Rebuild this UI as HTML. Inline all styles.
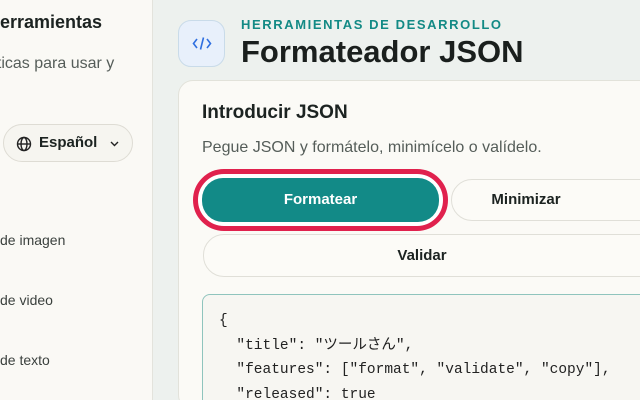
<!DOCTYPE html>
<html><head><meta charset="utf-8"><style>
*{margin:0;padding:0;box-sizing:border-box}
html,body{width:640px;height:400px;overflow:hidden}
body{background:#edf1ee;font-family:"Liberation Sans","Noto Sans CJK JP",sans-serif;position:relative;color:#1c2321}
.side{position:absolute;left:0;top:0;width:153px;height:400px;background:#faf9f5;border-right:1px solid #e3e3dc;overflow:hidden}
.abs{position:absolute;white-space:nowrap}
.pill{position:absolute;left:3px;top:124px;width:130px;height:38px;border:1px solid #dedcd4;border-radius:19px;background:#f6f5f0}
.btn{position:absolute;border-radius:21px;font-weight:bold;font-size:15px;text-align:center}
</style></head><body>
<div class="side">
<div class="abs" style="left:-13px;top:12px;font-size:18px;font-weight:bold">Herramientas</div>
<div class="abs" style="left:-36px;top:55px;font-size:16px;color:#555d59">Prácticas para usar y</div>
<div class="pill">
<svg style="position:absolute;left:12px;top:11px" width="16" height="16" viewBox="0 0 16 16" fill="none" stroke="#222" stroke-width="1.4"><circle cx="8" cy="8" r="6.5"/><ellipse cx="8" cy="8" rx="3" ry="6.5"/><path d="M1.5 8h13"/></svg>
<span class="abs" style="left:35px;top:9px;font-size:15px;font-weight:bold">Español</span>
<svg style="position:absolute;left:106px;top:15px" width="9" height="7" viewBox="0 0 9 7" fill="none" stroke="#222" stroke-width="1.4"><path d="M1 2l3.5 3.5L8 2"/></svg>
</div>
<div class="abs" style="left:0;top:232px;font-size:14px;color:#3a403d">de imagen</div>
<div class="abs" style="left:0;top:292px;font-size:14px;color:#3a403d">de video</div>
<div class="abs" style="left:0;top:352px;font-size:14px;color:#3a403d">de texto</div>
</div>
<div class="abs" style="left:178px;top:20px;width:47px;height:47px;border-radius:13px;background:#e8f0fb;border:1px solid #c9dbe9">
<svg style="position:absolute;left:13px;top:14px" width="20" height="17" viewBox="0 0 20 17" fill="none" stroke="#2f6fe0" stroke-width="1.6"><path d="M5 4L1.5 8.5 5 13M15 4l3.5 4.5L15 13M11.5 2.5l-3 12"/></svg>
</div>
<div class="abs" style="left:241px;top:17px;font-size:13px;font-weight:bold;color:#138a85;letter-spacing:1.6px">HERRAMIENTAS DE DESARROLLO</div>
<div class="abs" style="left:241px;top:34px;font-size:31px;font-weight:bold;color:#1a1f1d">Formateador JSON</div>
<div class="abs" style="left:178px;top:80px;width:480px;height:330px;border-radius:15px;background:#fbfaf6;border:1px solid #e2e2da"></div>
<div class="abs" style="left:202px;top:102px;font-size:19px;font-weight:bold">Introducir JSON</div>
<div class="abs" style="left:202px;top:139px;font-size:16px;color:#555d59">Pegue JSON y formátelo, minimícelo o valídelo.</div>
<div class="abs" style="left:193px;top:169px;width:255px;height:62px;border-radius:31px;border:5px solid #e0214d;background:#fff"></div>
<div class="btn" style="left:202px;top:178px;width:237px;height:44px;background:#128a87;color:#fff;line-height:44px">Formatear</div>
<div class="btn" style="left:451px;top:179px;width:220px;height:42px;border:1px solid #e0dfd8;background:#fcfbf7;line-height:40px;padding-right:70px">Minimizar</div>
<div class="btn" style="left:203px;top:234px;width:460px;height:43px;border:1px solid #e0dfd8;background:#fcfbf7;line-height:41px;padding-right:22px">Validar</div>
<div class="abs" style="left:202px;top:294px;width:460px;height:120px;border:1px solid #8fc4bd;border-radius:8px;background:#f7f6f2"></div>
<pre class="abs" style="white-space:pre;left:219px;top:309px;font-family:'Liberation Mono','Noto Sans CJK JP',monospace;font-size:14.5px;line-height:24.5px;color:#222">{
  "title": "ツールさん",
  "features": ["format", "validate", "copy"],
  "released": true</pre>
</body></html>
